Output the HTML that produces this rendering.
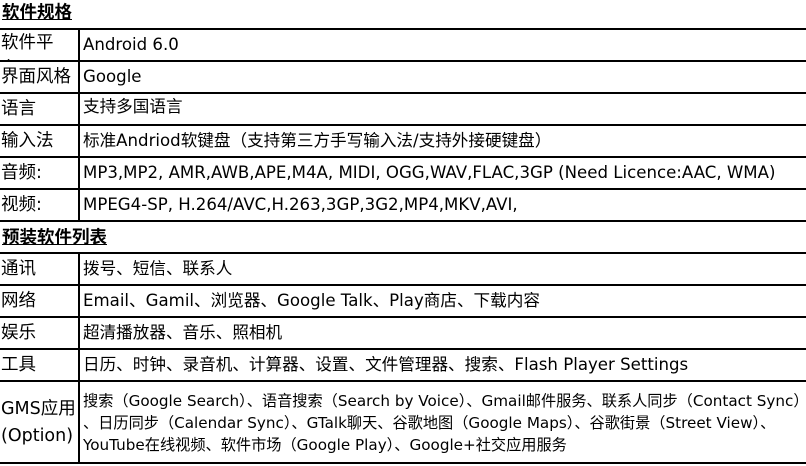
<!DOCTYPE html>
<html><head><meta charset="utf-8"><style>
body{margin:0;width:806px;height:466px;background:#fff;overflow:hidden;position:relative;font-family:"DejaVu Sans","Noto Sans CJK SC",sans-serif;color:#000}
.h{position:absolute;left:2px;font-weight:bold;font-size:17.5px;text-decoration:underline;line-height:20px;font-family:"Noto Sans CJK SC",sans-serif}
.l{position:absolute;left:0;width:806px;height:2px;background:#000}
.v{position:absolute;left:78px;width:2px;background:#000}
.c{position:absolute;font-size:16.6px;line-height:32px;white-space:nowrap;overflow:hidden}
.k{left:1px;width:76px;font-size:17.5px}
.d{left:83px}
</style></head><body>
<div class="h" style="top:2px">软件规格</div>
<div class="l" style="top:28px"></div>
<div class="l" style="top:60px"></div>
<div class="l" style="top:92px"></div>
<div class="l" style="top:124px"></div>
<div class="l" style="top:156px"></div>
<div class="l" style="top:188px"></div>
<div class="l" style="top:220px"></div>
<div class="v" style="top:28px;height:194px"></div>
<div class="c k" style="top:30px;height:30px;line-height:26px;white-space:normal;width:60px">软件平台</div>
<div class="c d" style="top:29px">Android 6.0</div>
<div class="c k" style="top:61px">界面风格</div>
<div class="c d" style="top:61px">Google</div>
<div class="c k" style="top:93px">语言</div>
<div class="c d" style="top:91px">支持多国语言</div>
<div class="c k" style="top:125px">输入法</div>
<div class="c d" style="top:125px">标准Andriod软键盘（支持第三方手写输入法/支持外接硬键盘）</div>
<div class="c k" style="top:157px">音频:</div>
<div class="c d" style="top:157px">MP3,MP2, AMR,AWB,APE,M4A, MIDI, OGG,WAV,FLAC,3GP (Need Licence:AAC, WMA)</div>
<div class="c k" style="top:189px">视频:</div>
<div class="c d" style="top:189px">MPEG4-SP, H.264/AVC,H.263,3GP,3G2,MP4,MKV,AVI,</div>
<div class="h" style="top:227px">预装软件列表</div>
<div class="l" style="top:252px"></div>
<div class="l" style="top:284px"></div>
<div class="l" style="top:316px"></div>
<div class="l" style="top:348px"></div>
<div class="l" style="top:380px"></div>
<div class="l" style="top:462px"></div>
<div class="v" style="top:252px;height:212px"></div>
<div class="c k" style="top:253px">通讯</div>
<div class="c d" style="top:253px">拨号、短信、联系人</div>
<div class="c k" style="top:285px">网络</div>
<div class="c d" style="top:285px">Email、Gamil、浏览器、Google Talk、Play商店、下载内容</div>
<div class="c k" style="top:317px">娱乐</div>
<div class="c d" style="top:317px">超清播放器、音乐、照相机</div>
<div class="c k" style="top:349px">工具</div>
<div class="c d" style="top:349px">日历、时钟、录音机、计算器、设置、文件管理器、搜索、Flash Player Settings</div>
<div class="c k" style="top:396px;line-height:27px;font-size:17.5px;white-space:normal">GMS应用<br>(Option)</div>
<div class="c d" style="top:390px;line-height:22px;font-size:15.2px;width:723px">搜索（Google Search）、语音搜索（Search by Voice）、Gmail邮件服务、联系人同步（Contact Sync）<br>、日历同步（Calendar Sync）、GTalk聊天、谷歌地图（Google Maps）、谷歌街景（Street View）、<br>YouTube在线视频、软件市场（Google Play）、Google+社交应用服务</div>
</body></html>
